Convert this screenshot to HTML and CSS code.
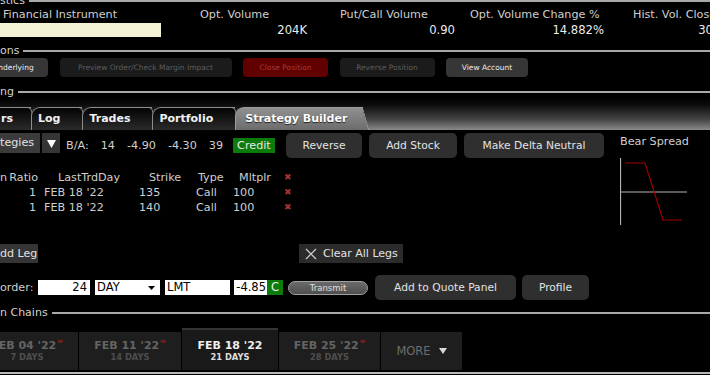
FILE: index.html
```html
<!DOCTYPE html>
<html lang="en">
<head>
    <meta charset="UTF-8">
    <meta name="viewport" content="width=device-width, initial-scale=1.0">
    <title>Strategy Builder</title>
    <link rel="stylesheet" href="styles.css">
</head>
<body>
    <div class="legend legend-top"><span>stics</span><i class="rule"></i></div>
    <section class="stats">
        <div class="stat stat-sym">
            <div class="stat-label">Financial Instrument</div>
            <div class="sym-box"></div>
        </div>
        <div class="stat stat-vol">
            <div class="stat-label">Opt. Volume</div>
            <div class="stat-value">204K</div>
        </div>
        <div class="stat stat-pc">
            <div class="stat-label">Put/Call Volume</div>
            <div class="stat-value">0.90</div>
        </div>
        <div class="stat stat-chg">
            <div class="stat-label">Opt. Volume Change %</div>
            <div class="stat-value">14.882%</div>
        </div>
        <div class="stat stat-hv">
            <div class="stat-label">Hist. Vol. Close</div>
            <div class="stat-value">30</div>
        </div>
    </section>

    <div class="legend legend-mid"><span>ons</span><i class="rule"></i></div>
    <section class="actions">
        <button class="act act-on act-under">nderlying</button>
        <button class="act act-preview">Preview Order/Check Margin Impact</button>
        <button class="act act-danger act-close">Close Position</button>
        <button class="act act-reverse">Reverse Position</button>
        <button class="act act-on act-account">View Account</button>
    </section>

    <div class="legend legend-trading"><span>ng</span><i class="rule"></i></div>
    <nav class="tabbar">
        <div class="tab tab-first">rs</div>
        <div class="tab">Log</div>
        <div class="tab">Trades</div>
        <div class="tab">Portfolio</div>
        <div class="tab tab-active">Strategy Builder</div>
    </nav>

    <section class="builder">
        <div class="builder-main">
            <div class="toolbar">
                <div class="select">tegies</div>
                <div class="caret-btn">
                    <svg width="9" height="9" viewBox="0 0 9 9"><polygon points="0,1 9,1 4.5,9" fill="#fff"/></svg>
                </div>
                <div class="quote">
                    <span>B/A:</span>
                    <span>14</span>
                    <span>-4.90</span>
                    <span>-4.30</span>
                    <span>39</span>
                    <span class="credit">Credit</span>
                </div>
                <button class="btn btn-reverse">Reverse</button>
                <button class="btn btn-stock">Add Stock</button>
                <button class="btn btn-delta">Make Delta Neutral</button>
            </div>
            <div class="legs">
                <div class="h">n</div>
                <div class="h c-ratio">Ratio</div>
                <div class="h c-day">LastTrdDay</div>
                <div class="h c-strike">Strike</div>
                <div class="h c-type">Type</div>
                <div class="h c-mult">Mltplr</div>
                <div class="c-del">&#10006;</div>

                <div></div>
                <div class="c-ratio">1</div>
                <div class="c-day">FEB 18 '22</div>
                <div class="c-strike">135</div>
                <div class="c-type">Call</div>
                <div class="c-mult">100</div>
                <div class="c-del">&#10006;</div>

                <div></div>
                <div class="c-ratio">1</div>
                <div class="c-day">FEB 18 '22</div>
                <div class="c-strike">140</div>
                <div class="c-type">Call</div>
                <div class="c-mult">100</div>
                <div class="c-del">&#10006;</div>
            </div>
        </div>
        <div class="payoff">
            <div class="payoff-title">Bear Spread</div>
            <svg width="70" height="70" viewBox="0 0 70 70">
                <line x1="0.5" y1="1" x2="0.5" y2="68" stroke="#b4b4b4" stroke-width="1.2"/>
                <line x1="0" y1="35" x2="67" y2="35" stroke="#b4b4b4" stroke-width="1.2"/>
                <polyline points="5,6 25,6 43,63 62,63" fill="none" stroke="#a00000" stroke-width="1.2"/>
            </svg>
        </div>
    </section>

    <section class="leg-actions">
        <button class="small-btn add-leg">dd Leg</button>
        <button class="small-btn clear-legs">
            <svg width="12" height="12" viewBox="0 0 12 12"><path d="M1 1L11 11M11 1L1 11" stroke="#d0d0d0" stroke-width="1.2"/></svg>
            <span>Clear All Legs</span>
        </button>
    </section>

    <section class="order-row">
        <span class="order-label">order:</span>
        <div class="field f-qty">24</div>
        <div class="field f-tif">
            <span>DAY</span>
            <svg width="7" height="4" viewBox="0 0 7 4"><polygon points="0,0 7,0 3.5,4" fill="#000"/></svg>
        </div>
        <div class="field f-type">LMT</div>
        <div class="field f-price">-4.85</div>
        <div class="field f-side">C</div>
        <button class="transmit">Transmit</button>
        <button class="btn btn-quote">Add to Quote Panel</button>
        <button class="btn btn-profile">Profile</button>
    </section>

    <div class="legend legend-chains"><span>n Chains</span><i class="rule"></i></div>
    <section class="expiries">
        <div class="expiry">
            <div class="exp-date">FEB 04 '22<sup>w</sup></div>
            <div class="exp-days">7 DAYS</div>
        </div>
        <div class="expiry">
            <div class="exp-date">FEB 11 '22<sup>w</sup></div>
            <div class="exp-days">14 DAYS</div>
        </div>
        <div class="expiry expiry-active">
            <div class="exp-date">FEB 18 '22</div>
            <div class="exp-days">21 DAYS</div>
        </div>
        <div class="expiry">
            <div class="exp-date">FEB 25 '22<sup>w</sup></div>
            <div class="exp-days">28 DAYS</div>
        </div>
        <div class="expiry expiry-more">
            <span>MORE</span>
            <svg width="8" height="6" viewBox="0 0 8 6"><polygon points="0,0 8,0 4,6" fill="#d8d8d8"/></svg>
        </div>
    </section>
    <div class="bottom-rule"></div>
</body>
</html>
```

FILE: styles.css
```css
body{
    margin: 0;
    width: 710px;
    height: 375px;
    overflow: hidden;
    background: #000;
    color: #cfcfcf;
    font-family: "DejaVu Sans", Verdana, sans-serif;
    font-size: 11.2px;
}
button{
    font-family: "DejaVu Sans", Verdana, sans-serif;
    border: 0;
    padding: 0;
    cursor: default;
}

/* fieldset style titles */
.legend{
    display: flex;
    align-items: center;
    gap: 4px;
    height: 12px;
    line-height: 12px;
    font-size: 11px;
    color: #d2d2d2;
    white-space: nowrap;
}
.legend .rule{
    flex: 1;
    height: 2px;
    background: #a8a8a8;
}
.legend-top{ margin-top: -5px; }
.legend-mid{ margin-top: 8px; }
.legend-trading{ margin-top: 9px; }
.legend-chains{ margin-top: 7px; }

/* statistics */
.stats{
    display: grid;
    grid-template-columns: 200px 140px 130px 163px 80px;
    padding-top: 1px;
}
.stat-label{
    height: 14px;
    line-height: 14px;
    white-space: nowrap;
}
.stat-value{
    margin-top: 1px;
    height: 14px;
    line-height: 14px;
    text-align: right;
    color: #ececec;
    font-size: 11.6px;
}
.stat-sym .stat-label{ padding-left: 3px; }
.sym-box{
    margin-top: 1px;
    width: 161px;
    height: 14px;
    background: #f4f2d6;
}
.stat-vol .stat-value{ padding-right: 33px; }
.stat-pc .stat-value{ padding-right: 15px; }
.stat-chg .stat-value{ padding-right: 29px; }

/* order actions */
.actions{
    display: flex;
    gap: 11.5px;
    margin-top: 1px;
    height: 19px;
}
.act{
    height: 19px;
    border-radius: 4px;
    font-size: 7.5px;
    background: #1b1b1b;
    color: #5c5c5c;
}
.act-on{
    background: #363636;
    color: #ececec;
}
.act-danger{
    background: #600000;
    color: #a53a3a;
}
.act-under{ width: 54px; margin-left: -6px; padding-right: 10px; }
.act-preview{ width: 172px; }
.act-close{ width: 85px; }
.act-reverse{ width: 95px; }
.act-account{ width: 82px; }

/* tabs */
.tabbar{
    display: flex;
    align-items: flex-end;
    height: 32px;
    background: linear-gradient(#000 0%, #0c0c0c 22%, #464646 68%, #8a8a8a 100%);
}
.tab{
    position: relative;
    box-sizing: border-box;
    height: 23px;
    line-height: 21px;
    padding: 0 22px 0 6px;
    border-top: 1px solid #8c8c8c;
    border-left: 1px solid #8c8c8c;
    border-top-left-radius: 9px;
    background: linear-gradient(#040404, #2a2a2a);
    color: #f2f2f2;
    font-weight: bold;
    font-size: 11px;
    white-space: nowrap;
}
.tab::after{
    content: "";
    position: absolute;
    top: -1px;
    right: 0;
    bottom: 0;
    width: 12px;
    background: linear-gradient(#040404, #2a2a2a);
    border-top: 1px solid #8c8c8c;
    border-right: 1px solid #8c8c8c;
    border-top-right-radius: 4px;
    transform: skewX(15deg);
    transform-origin: top left;
}
.tab-first{
    margin-left: -9px;
    padding-left: 9px;
    padding-right: 18px;
}
.tab-active{
    z-index: 1;
    padding-left: 9px;
    padding-right: 16px;
    background: linear-gradient(#909090, #6c6c6c);
    border-color: #9c9c9c;
    color: #fff;
    text-shadow: 0 1px 1px #222;
}
.tab-active::after{
    background: linear-gradient(#909090, #6c6c6c);
    border-color: #9c9c9c;
}

/* strategy builder */
.builder{
    display: flex;
    height: 97px;
}
.builder-main{
    width: 620px;
    padding-top: 3px;
}
.toolbar{
    display: flex;
    align-items: center;
    height: 25px;
}
.select{
    align-self: flex-start;
    width: 40px;
    height: 20px;
    line-height: 20px;
    background: #3b3b3b;
    color: #e2e2e2;
    overflow: hidden;
}
.caret-btn{
    align-self: flex-start;
    display: flex;
    align-items: center;
    justify-content: center;
    width: 18px;
    height: 20px;
    margin-left: 2px;
    background: #353535;
}
.quote{
    display: flex;
    align-items: center;
    gap: 12px;
    width: 220px;
    margin-left: 6px;
    white-space: nowrap;
}
.credit{
    height: 15px;
    line-height: 15px;
    padding: 0 4px;
    margin-left: -2px;
    background: #0b7b0b;
    color: #e8e8e8;
}
.btn{
    height: 25px;
    border-radius: 5px;
    background: #2f2f2f;
    color: #e2e2e2;
    font-size: 10.7px;
}
.btn-reverse{ width: 76px; }
.btn-stock{ width: 88px; margin-left: 7px; }
.btn-delta{ width: 140px; margin-left: 7px; }

.legs{
    display: grid;
    grid-template-columns: 8px 32px 95px 55px 42px 48px 20px;
    grid-auto-rows: 15px;
    line-height: 15px;
    margin-top: 12px;
    white-space: nowrap;
}
.c-ratio{ text-align: right; padding-right: 4px; }
.h.c-ratio{ padding-right: 2px; }
.c-day{ padding-left: 4px; }
.h.c-day{ padding-left: 18px; }
.c-strike{ padding-left: 4px; }
.h.c-strike{ padding-left: 14px; }
.c-type{ padding-left: 6px; }
.h.c-type{ padding-left: 8px; }
.c-mult{ padding-left: 1px; }
.h.c-mult{ padding-left: 7px; }
.c-del{
    padding-left: 4px;
    color: #a53333;
    font-size: 9px;
}

.payoff{
    padding-top: 5px;
}
.payoff-title{
    height: 14px;
    line-height: 14px;
    white-space: nowrap;
}
.payoff svg{
    display: block;
    margin-top: 8px;
}

/* legs buttons */
.leg-actions{
    display: flex;
    margin-top: 17px;
    height: 19px;
}
.small-btn{
    height: 19px;
    background: #353535;
    color: #e2e2e2;
    font-size: 11px;
}
.add-leg{
    width: 38px;
    text-align: left;
}
.clear-legs{
    display: flex;
    align-items: center;
    gap: 6px;
    width: 104px;
    margin-left: 261px;
    padding-left: 6px;
    background: #2b2b2b;
}

/* order entry */
.order-row{
    display: flex;
    align-items: center;
    margin-top: 12px;
    height: 25px;
}
.order-label{
    width: 38px;
}
.field{
    box-sizing: border-box;
    height: 15px;
    line-height: 15px;
    background: #fff;
    color: #000;
    font-size: 11.5px;
}
.f-qty{ width: 52px; text-align: right; padding-right: 3px; }
.f-tif{
    display: flex;
    align-items: center;
    justify-content: space-between;
    width: 65px;
    margin-left: 5px;
    padding: 0 5px 0 2px;
}
.f-type{ width: 65px; margin-left: 5px; padding-left: 2px; }
.f-price{ width: 33px; margin-left: 4px; text-align: right; padding-right: 1px; }
.f-side{
    width: 16px;
    background: #0b7b0b;
    color: #eee;
    text-align: center;
}
.transmit{
    box-sizing: border-box;
    width: 80px;
    height: 14px;
    margin-left: 5px;
    border: 1px solid #a0a0a0;
    border-radius: 8px;
    background: linear-gradient(#6a6a6a, #4e4e4e);
    color: #e0e0e0;
    font-size: 8.5px;
}
.btn-quote{ width: 141px; margin-left: 7px; }
.btn-profile{ width: 67px; margin-left: 6px; }

/* expirations */
.expiries{
    display: flex;
    align-items: flex-end;
    gap: 1px;
    height: 42px;
    margin-top: 9px;
    margin-left: -24px;
}
.expiry{
    box-sizing: border-box;
    display: flex;
    flex-direction: column;
    align-items: center;
    justify-content: flex-end;
    width: 102px;
    height: 38px;
    padding-bottom: 8px;
    background: #1e1e1e;
    font-weight: bold;
    white-space: nowrap;
}
.exp-date{
    height: 13px;
    line-height: 13px;
    font-size: 11px;
    color: #646464;
}
.exp-date sup{
    margin-left: 1px;
    font-size: 6px;
    line-height: 0;
    vertical-align: 6px;
    color: #8c1c1c;
}
.exp-days{
    height: 10px;
    line-height: 10px;
    font-size: 8.3px;
    color: #4e4e4e;
}
.expiry-active{
    width: 96px;
    height: 42px;
    background: #191919;
    border-top: 2px solid #353535;
}
.expiry-active .exp-date{ color: #eee; }
.expiry-active .exp-days{ color: #dedede; }
.expiry:nth-child(4){ width: 101px; }
.expiry-more{
    flex-direction: row;
    align-items: center;
    justify-content: center;
    gap: 8px;
    width: 81px;
    padding-bottom: 0;
    color: #6e6e6e;
    font-size: 11.5px;
    font-weight: normal;
}

.bottom-rule{
    height: 2px;
    margin-top: 2px;
    background: #b8b8b8;
}
```
